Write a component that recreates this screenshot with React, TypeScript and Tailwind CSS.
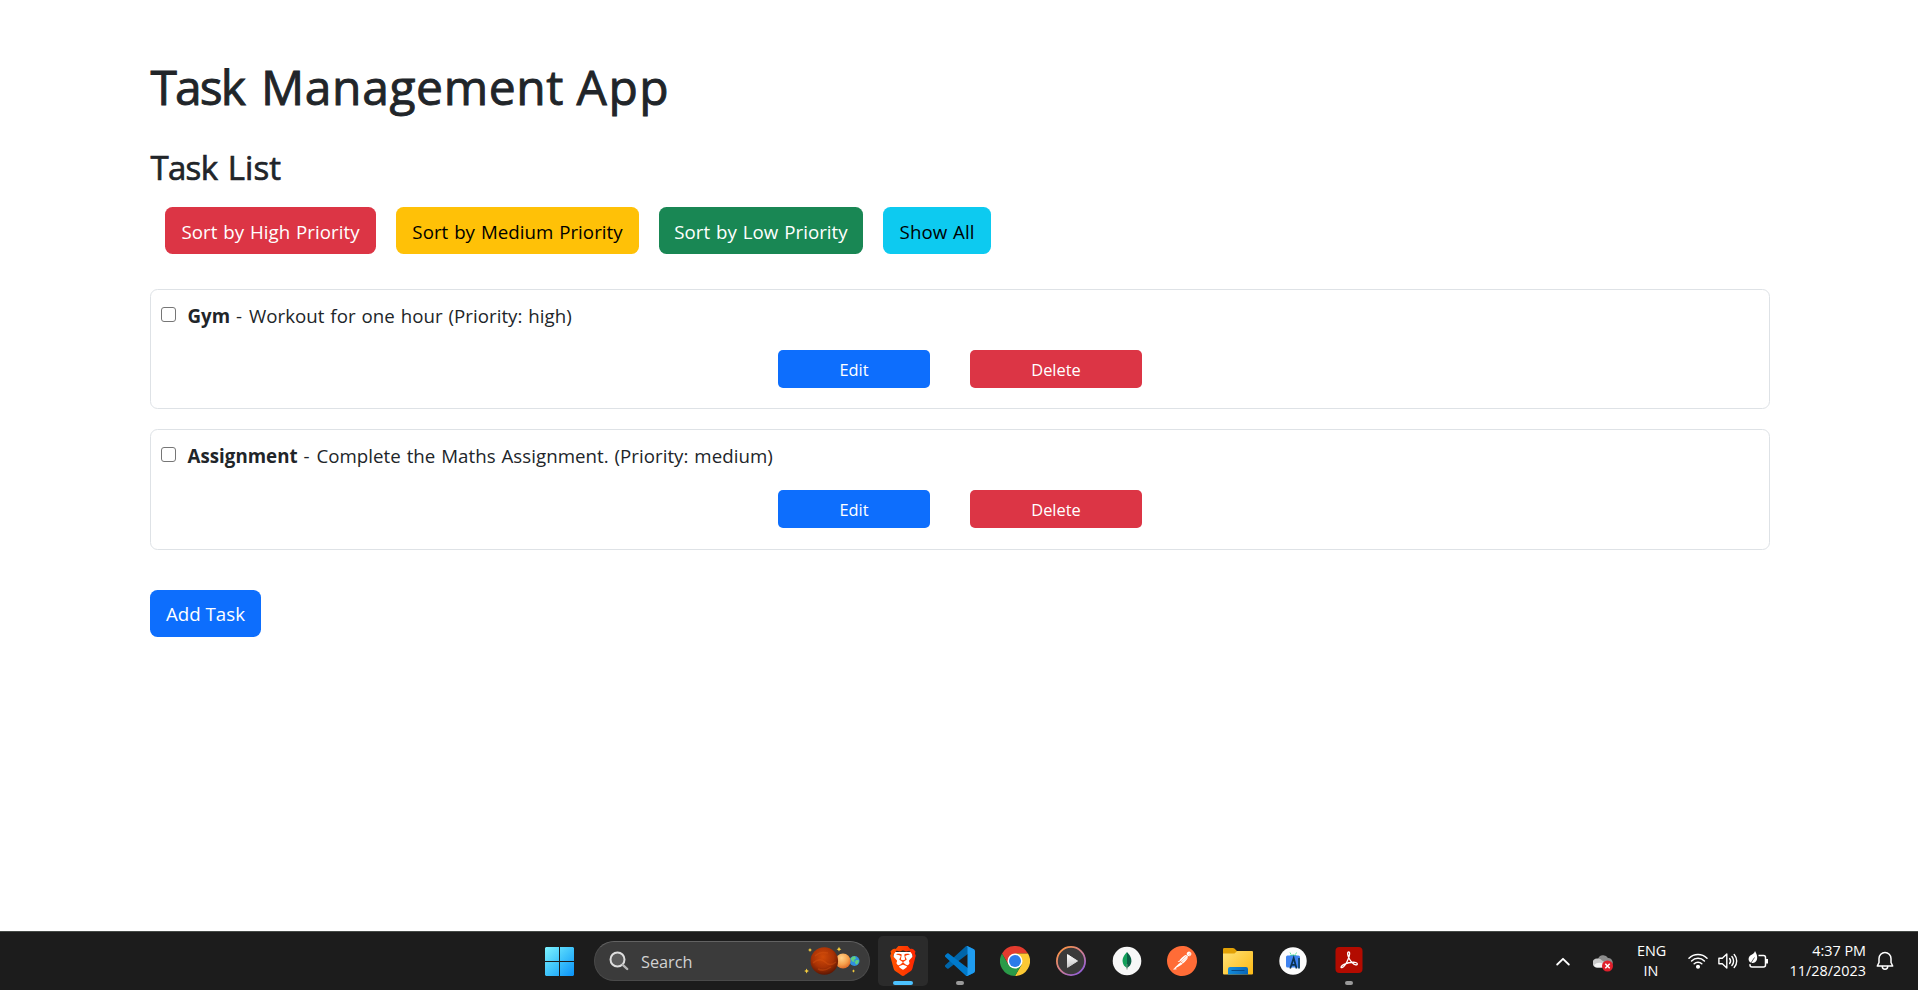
import React from "react";
import { SiBrave, SiPostman } from "react-icons/si";

type Task = { name: string; description: string; priority: string };

const tasks: Task[] = [
  { name: "Gym", description: "Workout for one hour", priority: "high" },
  { name: "Assignment", description: "Complete the Maths Assignment.", priority: "medium" },
];

const filters = [
  { label: "Sort by High Priority", className: "w-[211px] bg-[#dc3545] text-white" },
  { label: "Sort by Medium Priority", className: "w-[243px] bg-[#ffc107] text-black" },
  { label: "Sort by Low Priority", className: "w-[204px] bg-[#198754] text-white" },
  { label: "Show All", className: "w-[108px] bg-[#0dcaf0] text-black" },
];

function TaskCard({ task }: { task: Task }) {
  return (
    <li className="flex h-[120px] flex-col rounded-[7.5px] border border-[#dee2e6] px-[10px] pt-[10px] last:h-[121px]">
      <label className="flex h-[30px] items-center">
        <input
          type="checkbox"
          className="mr-[11.5px] mb-[1px] h-[15px] w-[15px] appearance-none rounded-[3px] border border-[#767676] bg-white"
        />
        <span className="pt-[2px] text-[18.7px] leading-[30px] tracking-[0.03px] [word-spacing:1px]">
          <b className="font-bold">{task.name}</b> <span className="mr-px">-</span> {task.description} (Priority: {task.priority})
        </span>
      </label>
      <div className="mt-5 flex justify-center gap-10">
        <button className="h-[38px] w-[152px] rounded-[5px] bg-[#0d6efd] pt-[2px] text-[16.4px] text-white">Edit</button>
        <button className="h-[38px] w-[172px] rounded-[5px] bg-[#dc3545] pt-[2px] text-[16.4px] text-white">Delete</button>
      </div>
    </li>
  );
}

function StartIcon() {
  return (
    <svg width="29" height="29" viewBox="0 0 29 29">
      <defs>
        <linearGradient id="start" x1="0" y1="0" x2="29" y2="29" gradientUnits="userSpaceOnUse">
          <stop offset="0" stopColor="#7df3ff" />
          <stop offset="0.5" stopColor="#3fc4fb" />
          <stop offset="1" stopColor="#0a92f8" />
        </linearGradient>
      </defs>
      <path fill="url(#start)" d="M1 0h13v14H0V1zM15 0h13l1 1v13H15zM0 15h14v14H1l-1-1zM15 15h14v13l-1 1H15z" />
    </svg>
  );
}

function SearchIcon() {
  return (
    <svg width="20" height="20" viewBox="0 0 20 20" fill="none" strokeLinecap="round">
      <circle cx="8.5" cy="8.5" r="7" fill="#5a5a5a" stroke="#dedede" strokeWidth="2" />
      <path d="M13.8 13.8l4.4 4.2" stroke="#b5b5b5" strokeWidth="2.4" />
    </svg>
  );
}

function PlanetsIcon() {
  const star = "M0-2.4L.8-.8L2.4 0L.8.8L0 2.4L-.8.8L-2.4 0L-.8-.8Z";
  return (
    <svg width="56" height="30" viewBox="0 0 56 30">
      <defs>
        <radialGradient id="mars" cx="0.45" cy="0.35" r="0.7">
          <stop offset="0" stopColor="#d04a08" />
          <stop offset="0.55" stopColor="#a83205" />
          <stop offset="1" stopColor="#501202" />
        </radialGradient>
        <radialGradient id="venus" cx="0.4" cy="0.3" r="0.8">
          <stop offset="0" stopColor="#ffd28a" />
          <stop offset="0.55" stopColor="#f5a04c" />
          <stop offset="1" stopColor="#d8571a" />
        </radialGradient>
      </defs>
      <circle cx="50.5" cy="15" r="5" fill="#2f8fe0" />
      <path d="M46.5 12.5q2-2.6 4.5-2.3l1 2.3-2 1.5.6 2-2.4-.5zM52 14l3 .2q0 3-2.8 4.6l-1.4-2.4z" fill="#5fd07f" />
      <circle cx="39" cy="15" r="7.6" fill="url(#venus)" />
      <circle cx="20.3" cy="15" r="13.8" fill="url(#mars)" />
      <path d="M11 10q5-5 13-3M9 17q7-6 12-1t11 0M14 23q6 3 13-2" fill="none" stroke="#e05a14" strokeOpacity="0.35" strokeWidth="1.5" />
      <g fill="#f8cf3e">
        <path transform="translate(6 4) scale(.8)" d={star} />
        <path transform="translate(35 3.2)" d={star} />
        <path transform="translate(2.6 25)" d={star} />
        <path transform="translate(49.5 25) scale(.7)" d={star} />
      </g>
    </svg>
  );
}

function BraveIcon() {
  return (
    <svg width="30" height="30" viewBox="0 0 30 30">
      <defs>
        <linearGradient id="brave" x1="0" y1="0" x2="24" y2="0" gradientUnits="userSpaceOnUse">
          <stop offset="0" stopColor="#ff5a00" />
          <stop offset="1" stopColor="#ff2000" />
        </linearGradient>
      </defs>
      <path fill="#fff" d="M6 6h18l1 8-3 8-7 5-7-5-3-8z" />
      <SiBrave x="0" y="0" width="30" height="30" size="30" fill="url(#brave)" />
    </svg>
  );
}

function CodeIcon() {
  return (
    <svg width="30" height="30" viewBox="0 0 100 100">
      <path fill="#0065A9" d="M96.46 10.8L75.86.88C73.47-.27 70.62.21 68.75 2.08L1.3 63.58c-1.81 1.66-1.81 4.51 0 6.17l5.51 5c1.49 1.35 3.72 1.45 5.32.24L93.36 13.37C96.09 11.3 100 13.25 100 16.67v-.24c0-2.4-1.38-4.59-3.54-5.63z" />
      <path fill="#007ACC" d="M96.46 89.2l-20.6 9.92c-2.39 1.15-5.24.67-7.11-1.2L1.3 36.42c-1.81-1.66-1.81-4.51 0-6.17l5.51-5c1.49-1.35 3.72-1.45 5.32-.24l81.23 61.62c2.73 2.07 6.64.12 6.64-3.3v.24c0 2.4-1.38 4.59-3.54 5.63z" />
      <path fill="#1F9CF0" d="M75.86 99.13c-2.39 1.14-5.24.66-7.11-1.21 2.31 2.3 6.25.67 6.25-2.59V4.67c0-3.26-3.94-4.89-6.25-2.59C70.62.21 73.47-.27 75.86.87l20.6 9.91c2.16 1.04 3.54 3.23 3.54 5.63v67.18c0 2.4-1.38 4.59-3.54 5.63z" />
    </svg>
  );
}

function ChromeIcon() {
  return (
    <svg width="30" height="30" viewBox="0 0 30 30">
      <path fill="#e33b2e" d="M2 7.5A15 15 0 0 1 28 7.5H15L8.5 18.75Z" />
      <path fill="#fcc934" d="M28 7.5H15L21.5 18.75L15 30A15 15 0 0 0 28 7.5Z" />
      <path fill="#2a9a48" d="M15 30A15 15 0 0 1 2 7.5L8.5 18.75H21.5Z" />
      <circle cx="15" cy="15" r="7.5" fill="#fff" />
      <circle cx="15" cy="15" r="6" fill="#2b7bea" />
    </svg>
  );
}

function MediaIcon() {
  return (
    <svg width="30" height="30" viewBox="0 0 30 30">
      <defs>
        <linearGradient id="ring" x1="4" y1="2" x2="26" y2="28" gradientUnits="userSpaceOnUse">
          <stop offset="0" stopColor="#ff9440" />
          <stop offset="0.5" stopColor="#cf7f92" />
          <stop offset="1" stopColor="#8d5be0" />
        </linearGradient>
        <linearGradient id="play" x1="0" y1="8" x2="0" y2="22" gradientUnits="userSpaceOnUse">
          <stop offset="0" stopColor="#fff" />
          <stop offset="1" stopColor="#c4c4c4" />
        </linearGradient>
      </defs>
      <circle cx="15" cy="15" r="14.1" fill="#3a3a3a" stroke="url(#ring)" strokeWidth="1.8" />
      <path fill="url(#play)" stroke="url(#play)" strokeLinejoin="round" d="M11.5 8.6v12.8L21.5 15z" />
    </svg>
  );
}

function LeafIcon() {
  return (
    <svg width="30" height="30" viewBox="0 0 30 30">
      <circle cx="15" cy="15" r="14.3" fill="#f7f7f7" />
      <path fill="#13a05b" d="M15 6C11.3 10 10.4 12.7 10.6 15.5C10.8 18.5 12.6 20.7 15 22Z" />
      <path fill="#0b5f45" d="M15 6C18.7 10 19.6 12.7 19.4 15.5C19.2 18.5 17.4 20.7 15 22Z" />
      <path d="M15 18v5.5" stroke="#6d8f7d" strokeWidth="1" />
    </svg>
  );
}

function PostmanIcon() {
  return (
    <svg width="30" height="30" viewBox="0 0 30 30">
      <circle cx="15" cy="15" r="13" fill="#fff" />
      <SiPostman x="0" y="0" width="30" height="30" size="30" fill="#ff6c37" />
    </svg>
  );
}

function FolderIcon() {
  return (
    <svg width="30" height="30" viewBox="0 0 30 30">
      <defs>
        <linearGradient id="folder" x1="4" y1="5" x2="26" y2="28" gradientUnits="userSpaceOnUse">
          <stop offset="0" stopColor="#ffdf70" />
          <stop offset="1" stopColor="#fdbd1c" />
        </linearGradient>
        <linearGradient id="tray" x1="5" y1="20" x2="25" y2="29" gradientUnits="userSpaceOnUse">
          <stop offset="0" stopColor="#1391e0" />
          <stop offset="1" stopColor="#0a63b4" />
        </linearGradient>
      </defs>
      <path fill="#e2a106" d="M0 3.2q0-1.2 1.2-1.2H10q.8 0 1.4.6L14 5v5H0z" />
      <path fill="url(#folder)" d="M0 7.5h10.500q1 0 1.600-.6L14 5h15q1 0 1 1v21.500q0 1-1 1H1q-1 0-1-1z" />
      <path fill="url(#tray)" d="M5 28.500v-5.500q0-2 2-2h16q2 0 2 2v5.500z" />
      <path d="M8.500 24.500h13" stroke="#084a86" strokeWidth="1" />
    </svg>
  );
}

function AndroidStudioIcon() {
  return (
    <svg width="30" height="30" viewBox="0 0 30 30">
      <circle cx="15" cy="15" r="13.7" fill="#fcfcfc" />
      <path fill="#3ddc84" d="M11 10.5a5 4.200 0 0 1 8.500 0z" />
      <path d="M12 6.500l1 2M18.500 6.500l-1 2" stroke="#3ddc84" strokeWidth=".8" />
      <rect x="8" y="9.500" width="14" height="12" rx="1.500" fill="#3f83f0" />
      <path d="M12.200 22.500L15.700 12L18.600 22.500M13.400 18.800h4.200" fill="none" stroke="#0b3350" strokeWidth="1.7" />
      <path d="M21 12v10.500" stroke="#16486e" strokeWidth="1.9" />
    </svg>
  );
}

function AcrobatIcon() {
  return (
    <svg width="30" height="30" viewBox="0 0 30 30">
      <rect x="1.5" y="1" width="27" height="26" rx="4" fill="#b30b00" />
      <path
        fill="none"
        stroke="#fff"
        strokeWidth="1.3"
        strokeLinejoin="round"
        d="M14.700 6C13 6 13.600 9.500 15 12.200C16.600 15.300 19.500 18.300 21.700 18.800C24 19.200 24 16.600 21 16.300C17.500 16 13.200 16.900 10 18.300C6.800 19.800 6.300 22 8 21.600C10 21 12.800 16.500 14.200 13C15.700 9.300 16.200 6 14.700 6Z"
      />
    </svg>
  );
}

const apps = [
  { name: "Brave", Icon: BraveIcon, state: "active" },
  { name: "Visual Studio Code", Icon: CodeIcon, state: "open" },
  { name: "Chrome", Icon: ChromeIcon, state: "idle" },
  { name: "Media Player", Icon: MediaIcon, state: "idle" },
  { name: "MongoDB Compass", Icon: LeafIcon, state: "idle" },
  { name: "Postman", Icon: PostmanIcon, state: "idle" },
  { name: "File Explorer", Icon: FolderIcon, state: "idle" },
  { name: "Android Studio", Icon: AndroidStudioIcon, state: "idle" },
  { name: "Acrobat", Icon: AcrobatIcon, state: "open" },
];

const tile: Record<string, string> = {
  active: "mr-[1.2px] bg-[#2b2b2b]",
  open: "",
  idle: "",
};

const indicator: Record<string, string> = {
  active: "h-1 w-5 rounded-full bg-[#4cc2ff]",
  open: "h-1 w-2 rounded-full bg-[#9a9a9a]",
  idle: "h-1 w-2",
};

function Taskbar() {
  return (
    <footer className="flex h-[59px] items-center border-t border-[#454a46] bg-[#1c1c1c] pr-[24px] pl-[545px] text-white">
      <StartIcon />
      <div className="ml-5 flex h-10 w-[276px] items-center rounded-full border border-[#4a4a4a] border-t-[#626262] bg-[#3b3b3b] pr-[9px] pl-[14px]">
        <SearchIcon />
        <span className="ml-3 flex-1 pt-[2px] text-[16.3px] text-[#d2d2d2]">Search</span>
        <PlanetsIcon />
      </div>
      <div className="ml-[8px] flex gap-[5.6px]">
        {apps.map(({ name, Icon, state }) => (
          <div
            key={name}
            className={"flex h-[50px] w-[50px] flex-col items-center justify-between rounded-[5px] pt-[10px] pb-px " + tile[state]}
          >
            <Icon />
            <i className={indicator[state]} />
          </div>
        ))}
      </div>
      <div className="ml-auto flex items-center text-[14.4px] leading-5">
        <svg width="14" height="9" viewBox="0 0 14 9" fill="none" stroke="#fff" strokeWidth="1.8" strokeLinecap="round" strokeLinejoin="round">
          <path d="M1.2 7.500L7 1.800L12.800 7.500" />
        </svg>
        <svg className="mt-[3px] ml-[23px]" width="20" height="18" viewBox="0 0 20 18">
          <path fill="#8c8c8c" d="M5 5a5.500 5.500 0 0 1 10-1a4.500 4.500 0 0 1 3 8H5z" />
          <path fill="#c9c9c9" d="M4 4.500a5 5 0 0 1 5 2l5 3-4 4H4a4.500 4.500 0 0 1 0-9z" />
          <path fill="#f3f3f3" d="M1 11q4-4 10-1l-2 3.500H4q-2.500 0-3-2.500z" />
          <circle cx="14.500" cy="12" r="5.500" fill="#e0202c" />
          <path d="M12.300 9.800l4.400 4.400M16.700 9.800l-4.400 4.400" stroke="#fff" strokeWidth="1.5" />
        </svg>
        <div className="ml-6 w-7 text-center whitespace-nowrap">ENG<br />IN</div>
        <svg className="ml-[23px]" width="20" height="20" viewBox="0 0 20 20" fill="none" stroke="#fff" strokeWidth="1.5" strokeLinecap="round">
          <path d="M1 7.300a12.800 12.800 0 0 1 18 0M3.600 10a9.100 9.100 0 0 1 12.800 0M6.200 12.700a5.400 5.400 0 0 1 7.600 0" />
          <circle cx="10" cy="15.800" r="1.300" fill="#fff" />
        </svg>
        <svg className="ml-[10px]" width="20" height="20" viewBox="0 0 20 20" fill="none" stroke="#fff" strokeWidth="1.4" strokeLinecap="round" strokeLinejoin="round">
          <path d="M.9 7.200v5.600h3.400L8.800 17V3L4.300 7.200z" />
          <path d="M11.600 7.500a4 4 0 0 1 0 5M13.900 5.500a6.800 6.800 0 0 1 0 9M16.200 3.500a9.700 9.700 0 0 1 0 13" />
        </svg>
        <svg className="ml-[10px]" width="20" height="20" viewBox="0 0 20 20" fill="none" stroke="#fff" strokeWidth="1.5" strokeLinejoin="round">
          <path d="M10.500 4.500h5q2 0 2 2v7.500q0 2-2 2H4q-2 0-2-2V13" />
          <path d="M19 8v4.500" strokeWidth="2" />
          <path d="M7 0C8.800 3 9.800 6 8.800 9C7.800 11.500 5.500 12.500 3.200 11.800C.4 10.800-.1 7.500 1.400 5.500C3 3.500 6 3.500 7 0Z" fill="#fff" stroke="none" />
          <path d="M6.500 6.500L2 13.500" stroke="#1c1c1c" strokeWidth=".7" />
        </svg>
        <div className="mb-px ml-[18px] w-[80px] text-right whitespace-nowrap">4:37 PM<br />11/28/2023</div>
        <svg className="ml-[10px]" width="18" height="20" viewBox="0 0 18 20" fill="none" stroke="#fff" strokeWidth="1.5" strokeLinecap="round" strokeLinejoin="round">
          <path d="M9 1.500a6 6 0 0 0-6 6v4L1.300 15h15.400L15 11.500v-4a6 6 0 0 0-6-6z" />
          <path d="M6.300 15.500a2.700 2.700 0 0 0 5.400 0" />
        </svg>
      </div>
    </footer>
  );
}

export default function App() {
  return (
    <div className="flex h-[990px] w-[1918px] flex-col bg-white font-['Open_Sans',sans-serif] text-[#212529]">
      <main className="flex-1 pt-[57px] pr-[148px] pl-[150px]">
        <h1 className="text-[48px] leading-[60px] [-webkit-text-stroke:0.9px_#212529]">
          <span className="mr-[4.5px] ml-[0.5px] tracking-[-1.9px]">Task</span>{" "}
          <span className="tracking-[0.6px]">Management</span>{" "}
          <span className="tracking-[1.6px]">App</span>
        </h1>
        <h2 className="mt-[30px] text-[33px] leading-[42px] [-webkit-text-stroke:0.7px_#212529]">
          <span className="mr-[2px] ml-[0.5px] tracking-[-0.7px]">Task</span> List
        </h2>
        <div className="mt-[18px] ml-[15px] flex gap-5">
          {filters.map((f) => (
            <button
              key={f.label}
              className={"h-[47px] rounded-[7.5px] pt-[3px] text-[18.7px] tracking-[0.03px] whitespace-nowrap [word-spacing:1px] " + f.className}
            >
              {f.label}
            </button>
          ))}
        </div>
        <ul className="mt-[35px] flex flex-col gap-5">
          {tasks.map((t) => (
            <TaskCard key={t.name} task={t} />
          ))}
        </ul>
        <button className="mt-10 h-[47px] w-[111px] rounded-[7.5px] bg-[#0d6efd] pt-px text-[18.7px] text-white">
          Add Task
        </button>
      </main>
      <Taskbar />
    </div>
  );
}
